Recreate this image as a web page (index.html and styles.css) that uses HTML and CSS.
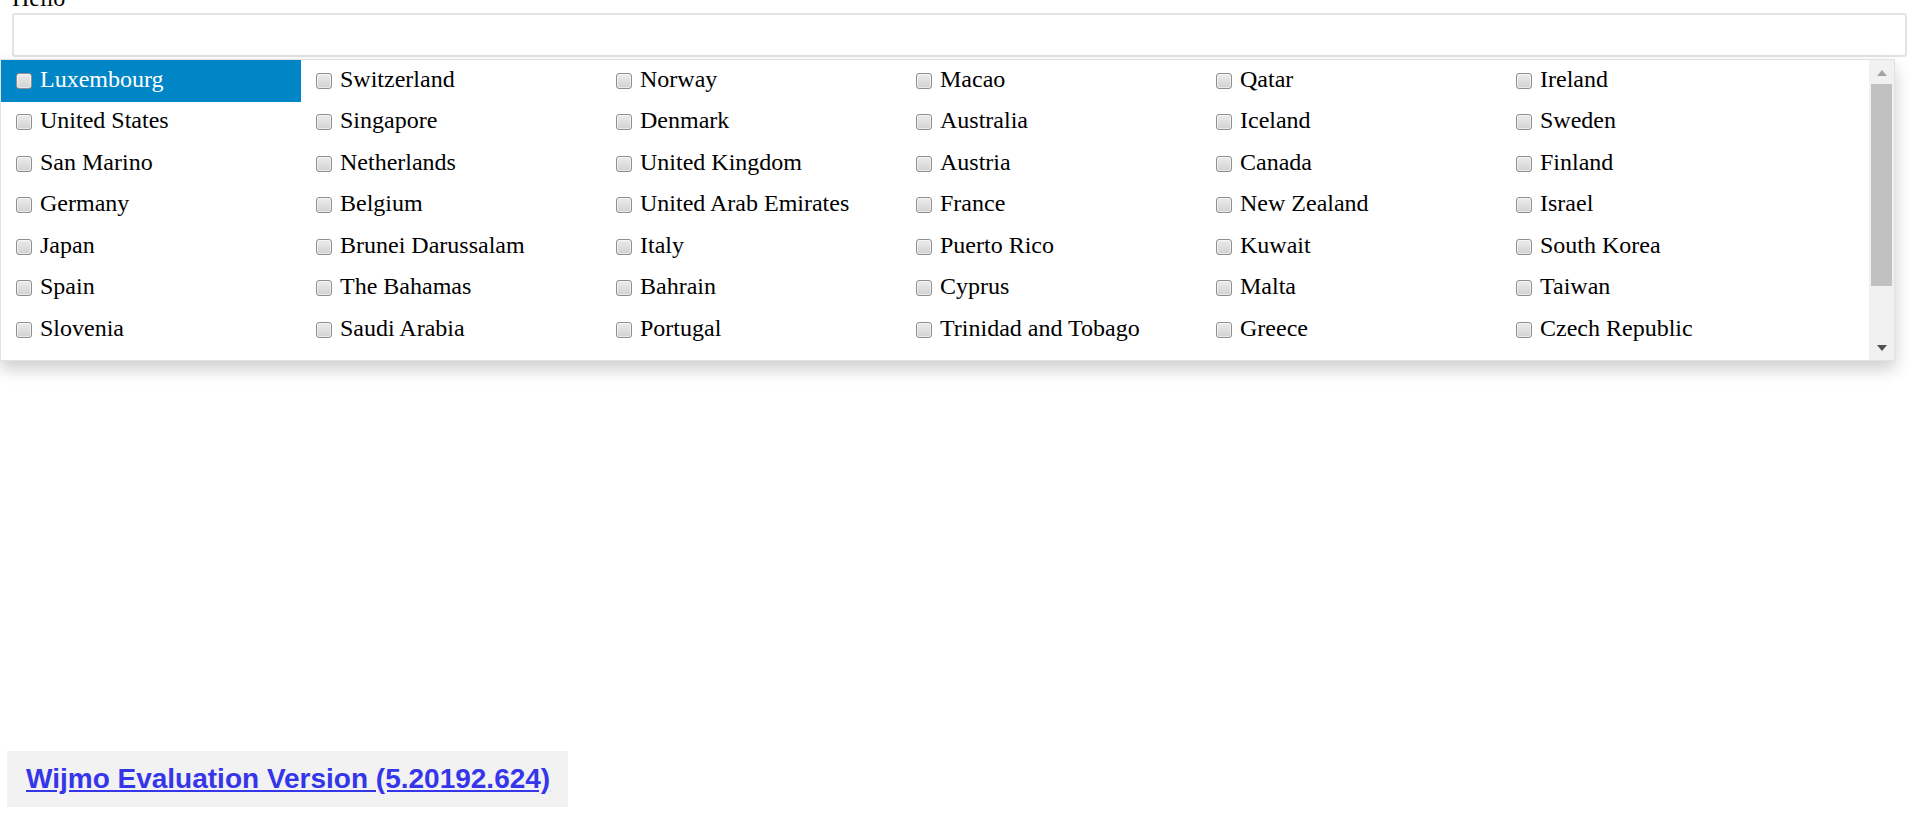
FILE: index.html
```html
<!DOCTYPE html>
<html>
<head>
    <title>Country Picker</title>
    <link rel="stylesheet" href="styles.css">
</head>
<body>
    <div class="field">
        <label class="caption" for="countries">Hello</label>
        <input class="picker" type="text" id="countries">
    </div>

    <!-- dropdown list, open under the input -->
    <div class="dropdown">
        <div class="list">
            <label class="item selected"><input type="checkbox"><span>Luxembourg</span></label>
            <label class="item"><input type="checkbox"><span>Switzerland</span></label>
            <label class="item"><input type="checkbox"><span>Norway</span></label>
            <label class="item"><input type="checkbox"><span>Macao</span></label>
            <label class="item"><input type="checkbox"><span>Qatar</span></label>
            <label class="item"><input type="checkbox"><span>Ireland</span></label>

            <label class="item"><input type="checkbox"><span>United States</span></label>
            <label class="item"><input type="checkbox"><span>Singapore</span></label>
            <label class="item"><input type="checkbox"><span>Denmark</span></label>
            <label class="item"><input type="checkbox"><span>Australia</span></label>
            <label class="item"><input type="checkbox"><span>Iceland</span></label>
            <label class="item"><input type="checkbox"><span>Sweden</span></label>

            <label class="item"><input type="checkbox"><span>San Marino</span></label>
            <label class="item"><input type="checkbox"><span>Netherlands</span></label>
            <label class="item"><input type="checkbox"><span>United Kingdom</span></label>
            <label class="item"><input type="checkbox"><span>Austria</span></label>
            <label class="item"><input type="checkbox"><span>Canada</span></label>
            <label class="item"><input type="checkbox"><span>Finland</span></label>

            <label class="item"><input type="checkbox"><span>Germany</span></label>
            <label class="item"><input type="checkbox"><span>Belgium</span></label>
            <label class="item"><input type="checkbox"><span>United Arab Emirates</span></label>
            <label class="item"><input type="checkbox"><span>France</span></label>
            <label class="item"><input type="checkbox"><span>New Zealand</span></label>
            <label class="item"><input type="checkbox"><span>Israel</span></label>

            <label class="item"><input type="checkbox"><span>Japan</span></label>
            <label class="item"><input type="checkbox"><span>Brunei Darussalam</span></label>
            <label class="item"><input type="checkbox"><span>Italy</span></label>
            <label class="item"><input type="checkbox"><span>Puerto Rico</span></label>
            <label class="item"><input type="checkbox"><span>Kuwait</span></label>
            <label class="item"><input type="checkbox"><span>South Korea</span></label>

            <label class="item"><input type="checkbox"><span>Spain</span></label>
            <label class="item"><input type="checkbox"><span>The Bahamas</span></label>
            <label class="item"><input type="checkbox"><span>Bahrain</span></label>
            <label class="item"><input type="checkbox"><span>Cyprus</span></label>
            <label class="item"><input type="checkbox"><span>Malta</span></label>
            <label class="item"><input type="checkbox"><span>Taiwan</span></label>

            <label class="item"><input type="checkbox"><span>Slovenia</span></label>
            <label class="item"><input type="checkbox"><span>Saudi Arabia</span></label>
            <label class="item"><input type="checkbox"><span>Portugal</span></label>
            <label class="item"><input type="checkbox"><span>Trinidad and Tobago</span></label>
            <label class="item"><input type="checkbox"><span>Greece</span></label>
            <label class="item"><input type="checkbox"><span>Czech Republic</span></label>
        </div>
        <div class="scrollbar">
            <div class="scroll-btn"><span class="arrow-up"></span></div>
            <div class="scroll-track"><div class="scroll-thumb"></div></div>
            <div class="scroll-btn down"><span class="arrow-down"></span></div>
        </div>
    </div>

    <div class="eval">
        <a href="#">Wijmo Evaluation Version (5.20192.624)</a>
    </div>
</body>
</html>
```

FILE: styles.css
```css
body {
    font-family: "Liberation Serif", "Times New Roman", serif;
    font-size: 24px;
    background-color: #ffffff;
    margin: 0;
    padding: 0;
    min-height: 100vh;
    display: flex;
    flex-direction: column;
    position: relative;
}

.field {
    margin: -16px 8px 0 12px;
}

.caption {
    display: block;
    line-height: 28px;
}

.picker {
    display: block;
    box-sizing: border-box;
    width: 100%;
    height: 44px;
    margin: 1px 0 0 0;
    border: 2px solid #e3e3e3;
    border-radius: 3px;
    font: inherit;
    outline: none;
}

.dropdown {
    position: absolute;
    top: 59px;
    left: 0;
    width: 1895px;
    height: 302px;
    box-sizing: border-box;
    border: 1px solid #e2e2e2;
    background-color: #ffffff;
    box-shadow: 0 8px 16px rgba(0, 0, 0, 0.2);
    display: flex;
}

.list {
    flex: 1;
    display: flex;
    flex-wrap: wrap;
    align-content: flex-start;
    overflow: hidden;
}

.item {
    width: 300px;
    height: 41.5px;
    box-sizing: border-box;
    padding-left: 15px;
    display: flex;
    align-items: center;
    line-height: 27.6px;
    white-space: nowrap;
}

.item span {
    margin-top: -2px;
}

.item.selected {
    background-color: #0085c7;
    color: #ffffff;
}

.item input {
    -webkit-appearance: none;
    appearance: none;
    flex: none;
    width: 16px;
    height: 16px;
    margin: 0 8px 0 0;
    border: 1px solid #8f8f8f;
    border-radius: 3px;
    background: linear-gradient(#ececec, #d2d2d2);
    box-shadow: inset 0 0 0 1px rgba(255, 255, 255, 0.5);
}

/* fake scrollbar, drawn as the list was at top */
.scrollbar {
    flex: none;
    width: 25px;
    background-color: #f1f1f1;
    display: flex;
    flex-direction: column;
}

.scroll-btn {
    height: 24px;
    display: flex;
    align-items: center;
    justify-content: center;
}

.scroll-btn.down {
    height: 25px;
}

.arrow-up {
    width: 0;
    height: 0;
    margin-top: 2px;
    border-left: 5.5px solid transparent;
    border-right: 5.5px solid transparent;
    border-bottom: 6px solid #a3a3a3;
}

.arrow-down {
    width: 0;
    height: 0;
    border-left: 5.5px solid transparent;
    border-right: 5.5px solid transparent;
    border-top: 6px solid #505050;
}

.scroll-track {
    flex: 1;
    padding: 0 2px;
}

.scroll-thumb {
    height: 202px;
    background-color: #c1c1c1;
}

.eval {
    align-self: flex-start;
    margin: auto 0 7px 7px;
    padding: 12px 18px 12px 19px;
    background-color: #f2f2f2;
    font-family: "Liberation Sans", Arial, sans-serif;
    font-size: 28px;
    font-weight: bold;
    line-height: 32px;
}

.eval a {
    color: #3535ea;
}
```
